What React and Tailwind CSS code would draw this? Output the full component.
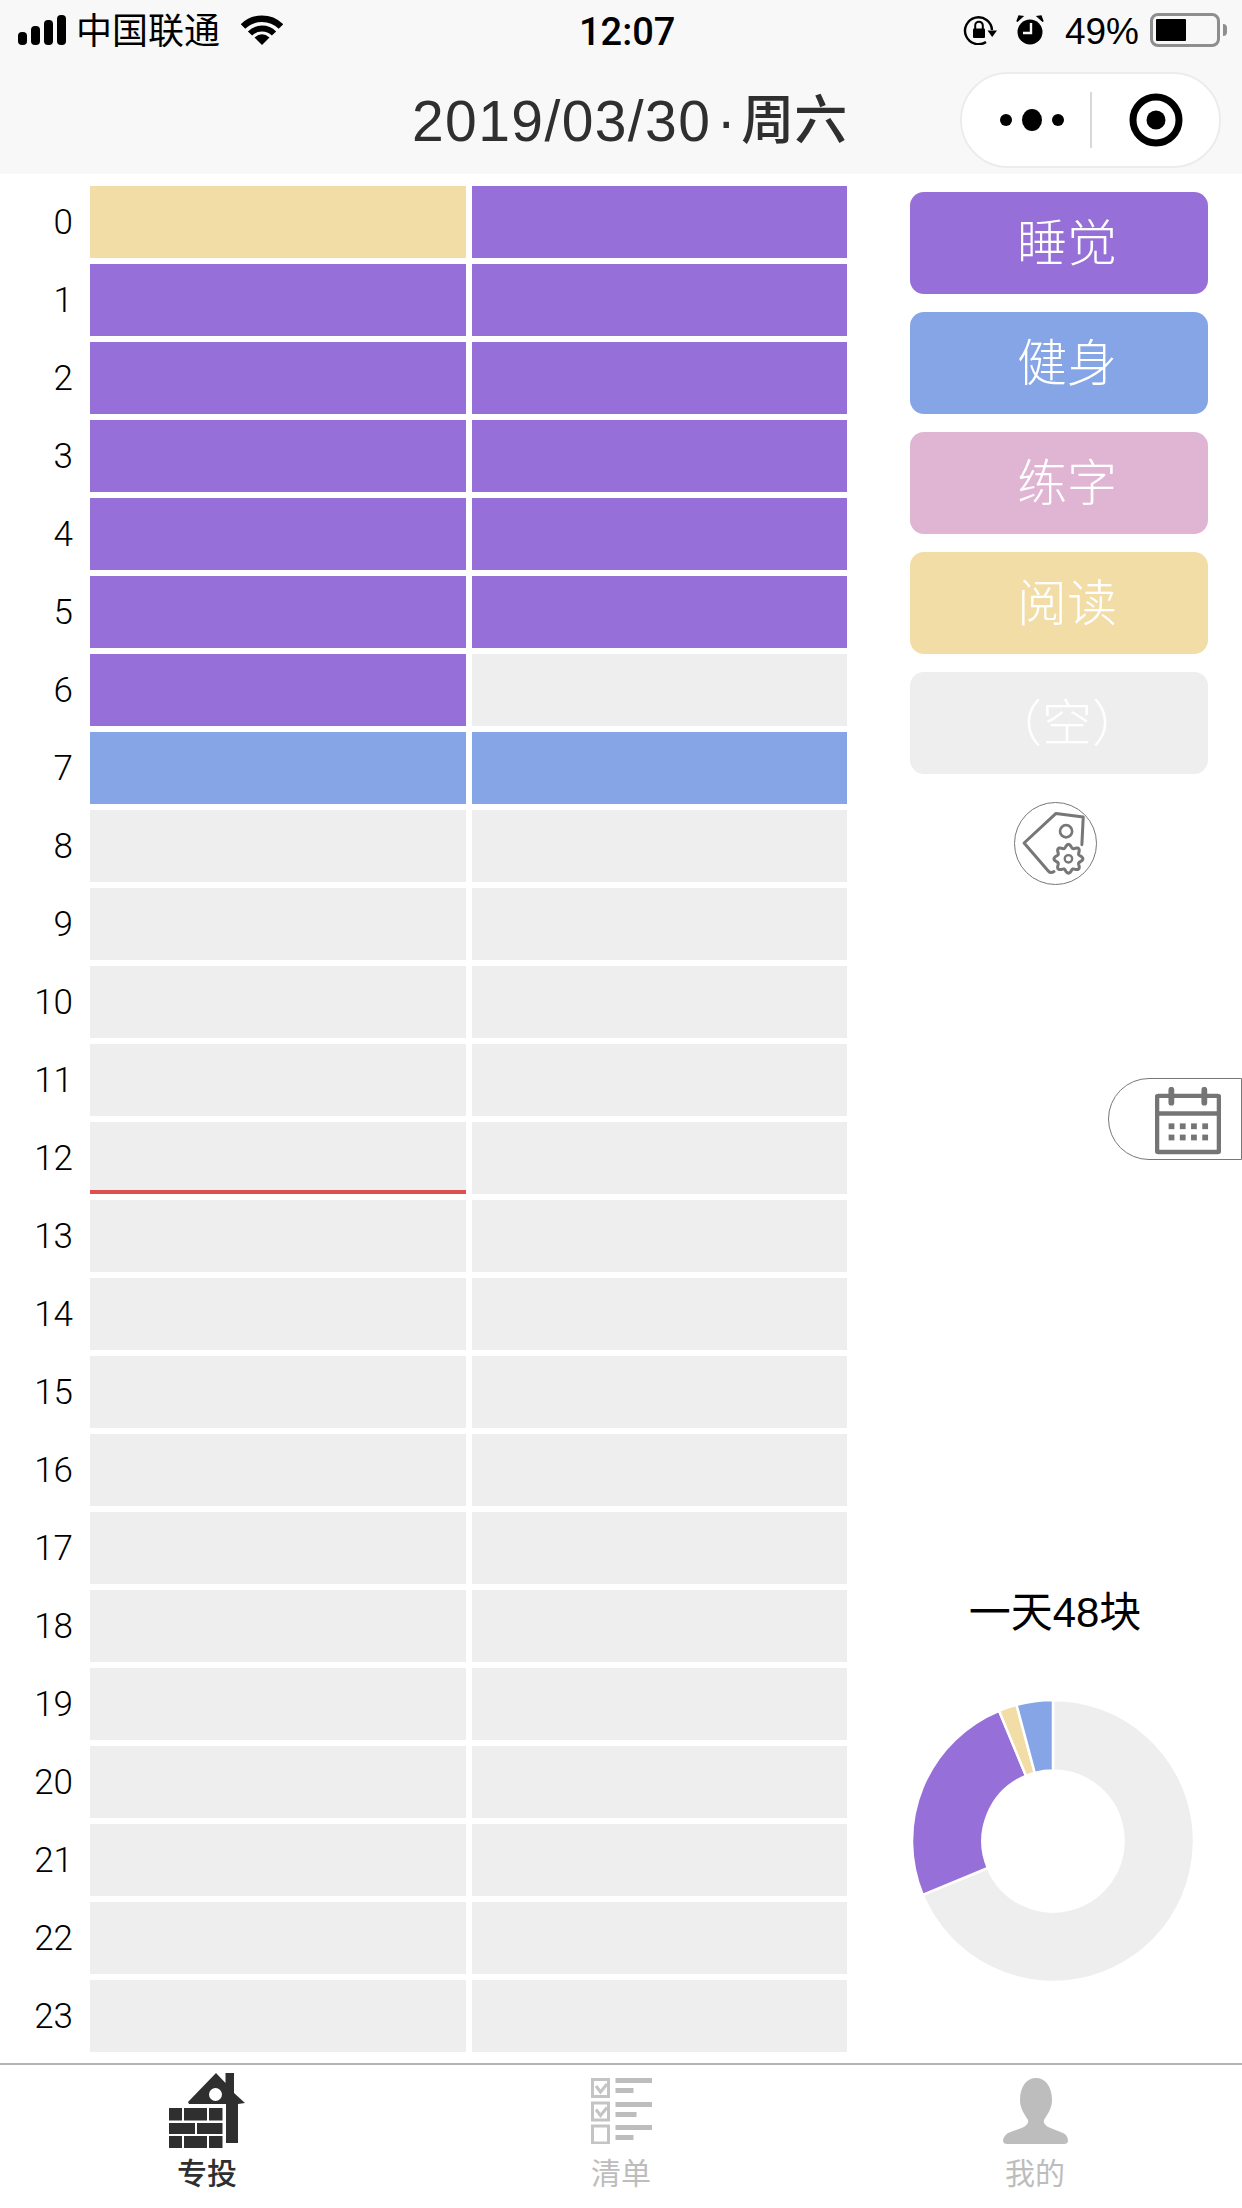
const PURPLE = 'bg-[#976fd8]';
const BLUE = 'bg-[#86a5e6]';
const PINK = 'bg-[#e0b4d3]';
const YELLOW = 'bg-[#f3dda6]';
const EMPTY = 'bg-[#eeeeee]';

const hours = Array.from({ length: 24 }, (_, i) => i);

function cellColors(hour) {
  if (hour === 0) return [YELLOW, PURPLE];
  if (hour <= 5) return [PURPLE, PURPLE];
  if (hour === 6) return [PURPLE, EMPTY];
  if (hour === 7) return [BLUE, BLUE];
  return [EMPTY, EMPTY];
}

const labels = [
  { text: '睡觉', color: PURPLE },
  { text: '健身', color: BLUE },
  { text: '练字', color: PINK },
  { text: '阅读', color: YELLOW },
  { text: '（空）', color: EMPTY },
];

const segments = [
  { from: 0, to: 247.5, fill: '#eeeeee' },
  { from: 247.5, to: 337.5, fill: '#976fd8' },
  { from: 337.5, to: 345, fill: '#f3dda6' },
  { from: 345, to: 360, fill: '#86a5e6' },
];

function point(cx, cy, r, deg) {
  const a = (deg * Math.PI) / 180;
  return [cx + r * Math.sin(a), cy - r * Math.cos(a)];
}

function arcPath(cx, cy, outer, inner, from, to) {
  const large = to - from > 180 ? 1 : 0;
  const [x1, y1] = point(cx, cy, outer, from);
  const [x2, y2] = point(cx, cy, outer, to);
  const [x3, y3] = point(cx, cy, inner, to);
  const [x4, y4] = point(cx, cy, inner, from);
  return `M${x1} ${y1}A${outer} ${outer} 0 ${large} 1 ${x2} ${y2}L${x3} ${y3}A${inner} ${inner} 0 ${large} 0 ${x4} ${y4}Z`;
}

function gearPath(cx, cy) {
  let d = '';
  for (let i = 0; i <= 96; i++) {
    const a = (i / 96) * Math.PI * 2;
    const r = 38 + 5 * Math.cos(a * 8);
    d += `${i === 0 ? 'M' : 'L'}${cx + r * Math.sin(a)} ${cy - r * Math.cos(a)}`;
  }
  return d + 'Z';
}

function SignalIcon() {
  return (
    <svg width="48" height="30" viewBox="0 0 48 30" className="shrink-0">
      <rect x="0" y="17" width="9" height="13" rx="4" fill="#000" />
      <rect x="13" y="11" width="9" height="19" rx="4" fill="#000" />
      <rect x="26" y="5" width="9" height="25" rx="4" fill="#000" />
      <rect x="39" y="0" width="9" height="30" rx="4" fill="#000" />
    </svg>
  );
}

function WifiIcon() {
  return (
    <svg width="42" height="30" viewBox="0 0 42 30" className="shrink-0">
      <path d="M2 11.5A27 27 0 0 1 40 11.5" fill="none" stroke="#000" strokeWidth="6.5" />
      <path d="M9 18.5A17 17 0 0 1 33 18.5" fill="none" stroke="#000" strokeWidth="6" />
      <path d="M21 30L13.5 22.5Q21 16 28.5 22.5Z" fill="#000" />
    </svg>
  );
}

function RotateLockIcon() {
  return (
    <svg width="34" height="30" viewBox="0 0 34 30" className="shrink-0">
      <path d="M29 15A13.5 13.5 0 1 0 23 27" fill="none" stroke="#000" strokeWidth="2.4" />
      <path d="M24.5 15.5H34L29.2 22Z" fill="#000" />
      <rect x="10" y="13.5" width="12" height="9.5" rx="1" fill="#000" />
      <path d="M12.2 14V10.5a3.8 3.8 0 0 1 7.6 0V14" fill="none" stroke="#000" strokeWidth="2" />
    </svg>
  );
}

function AlarmIcon() {
  return (
    <svg width="28" height="30" viewBox="0 0 28 30" className="shrink-0">
      <circle cx="14" cy="17" r="12.5" fill="#000" />
      <path d="M15 8V18H7" fill="none" stroke="#f8f8f8" strokeWidth="2.4" />
      <path d="M1 6.5L6.5 1.5L3 1Z M27 6.5L21.5 1.5L25 1Z" fill="#000" stroke="#000" strokeWidth="1.5" />
    </svg>
  );
}

function StatusBar() {
  return (
    <div className="h-[60px] flex items-center pl-[18px] pr-[15px] text-[36px] leading-none text-black">
      <SignalIcon />
      <span className="ml-[10px] mt-[3px]">中国联通</span>
      <span className="ml-[21px]"><WifiIcon /></span>
      <span className="ml-[296px] mt-[4px] [font-family:Roboto,sans-serif] font-medium text-[38px]">12:07</span>
      <span className="ml-auto"><RotateLockIcon /></span>
      <span className="ml-[19px]"><AlarmIcon /></span>
      <span className="ml-[21px] mt-[3px] text-[37px]">49%</span>
      <div className="ml-[11px] w-[70px] h-[34px] border-[3px] border-[#8e8e8e] rounded-[8px] p-[3px] flex">
        <div className="w-[30px] bg-black rounded-[1px]" />
      </div>
      <div className="ml-[3px] w-[4px] h-[12px] bg-[#8e8e8e] rounded-r-[4px]" />
    </div>
  );
}

function NavBar() {
  return (
    <div className="h-[114px] flex items-start">
      <div className="ml-[412px] mt-[28px] flex items-center text-[57px] leading-[66px] text-[#2f2f2f] whitespace-nowrap">
        <span className="tracking-[1.4px]">2019/03/30</span>
        <span className="w-[30px] text-center">·</span>
        <span className="text-[53px] font-medium">周六</span>
      </div>
      <div className="ml-auto mr-[21px] mt-[12px] w-[261px] h-[96px] rounded-full bg-white border-2 border-[#ececec] flex items-center">
        <svg width="66" height="24" viewBox="0 0 66 24" className="ml-[37px]">
          <circle cx="7" cy="12" r="6" fill="#000" />
          <ellipse cx="33" cy="12" rx="10" ry="11" fill="#000" />
          <circle cx="59" cy="12" r="6" fill="#000" />
        </svg>
        <div className="ml-[25px] w-[2px] h-[56px] bg-[#d8d8d8]" />
        <svg width="54" height="54" viewBox="0 0 54 54" className="ml-[37px]">
          <circle cx="27" cy="27" r="23" fill="none" stroke="#000" strokeWidth="7" />
          <circle cx="27" cy="27" r="9.5" fill="#000" />
        </svg>
      </div>
    </div>
  );
}

function TagGearIcon() {
  return (
    <div className="w-[83px] h-[83px] rounded-full border border-[#777777] flex items-center justify-center">
      <svg width="83" height="83" viewBox="103 63 247 247" className="shrink-0">
        <path d="M305 190L309 108L228 97L133 185L205 268C210 274 216 274 222 270" fill="none" stroke="#777" strokeWidth="9" strokeLinecap="round" strokeLinejoin="round" />
        <circle cx="258" cy="150" r="18" fill="none" stroke="#777" strokeWidth="8" />
        <path d={gearPath(265, 232)} fill="#fff" stroke="#777" strokeWidth="9" />
        <circle cx="265" cy="232" r="11" fill="none" stroke="#777" strokeWidth="7" />
      </svg>
    </div>
  );
}

function Donut() {
  return (
    <svg width="290" height="284" viewBox="0 0 290 284" className="mt-[56px] mb-[80px] shrink-0">
      {segments.map((s) => (
        <path key={s.from} d={arcPath(143, 142, 141, 70.5, s.from, s.to)} fill={s.fill} stroke="#fff" strokeWidth="2.5" />
      ))}
    </svg>
  );
}

function CalendarTab() {
  return (
    <div className="absolute left-[1108px] top-[1078px] w-[134px] h-[82px] rounded-l-[41px] border border-[#777777] bg-white flex items-center">
      <svg width="66" height="68" viewBox="527 920 194 200" className="ml-[46px] mt-[4px] shrink-0">
        <rect x="533" y="946" width="182" height="165" rx="3" fill="none" stroke="#757575" strokeWidth="13" />
        <path d="M533 998H715" stroke="#757575" strokeWidth="13" />
        <path d="M575 928V966M672 928V966" stroke="#757575" strokeWidth="17" strokeLinecap="round" />
        {[567, 600, 633, 666].map((x) => (
          <g key={x} fill="#757575">
            <rect x={x} y="1027" width="17" height="17" />
            <rect x={x} y="1060" width="17" height="17" />
          </g>
        ))}
      </svg>
    </div>
  );
}

function HomeIcon() {
  return (
    <svg width="76" height="75" viewBox="0 0 76 75">
      <g fill="#2f2f2f">
        <path d="M47 0L56.5 10V0H65V20L76 30L69 31V70H57V31H20L19 29Z" />
        <rect x="0" y="35" width="13" height="12.5" />
        <rect x="15" y="35" width="23" height="12.5" />
        <rect x="40" y="35" width="13.5" height="12.5" />
        <rect x="0" y="50" width="26" height="11" />
        <rect x="28" y="50" width="25.5" height="11" />
        <rect x="0" y="63" width="13" height="12" />
        <rect x="15" y="63" width="23" height="12" />
        <rect x="40" y="63" width="13.5" height="12" />
      </g>
      <circle cx="46.5" cy="21.5" r="6.5" fill="#fff" />
    </svg>
  );
}

function ListIcon() {
  return (
    <svg width="61" height="66" viewBox="0 0 61 66">
      <g fill="#bdbdbd">
        <rect x="24.5" y="0" width="36.5" height="5" />
        <rect x="24.5" y="10" width="18" height="5" />
        <rect x="24.5" y="24" width="36.5" height="5" />
        <rect x="24.5" y="34" width="21" height="5" />
        <rect x="24.5" y="47" width="36.5" height="5" />
        <rect x="24.5" y="57" width="18" height="5" />
      </g>
      <g fill="none" stroke="#c4c4c4" strokeWidth="3">
        <rect x="1.5" y="1.5" width="16" height="17" />
        <rect x="1.5" y="25" width="16" height="17" />
        <rect x="1.5" y="48" width="16" height="17" />
        <path d="M5 8L9.5 14L16 6M5 31.5L9.5 37.5L16 29.5" />
      </g>
    </svg>
  );
}

function PersonIcon() {
  return (
    <svg width="65" height="66" viewBox="0 0 65 66">
      <path
        d="M17 22C17 8 24 0 33 0C42 0 49 8 49 22C49 31 44 37 41 42C40 46 44 49 50 51L60 55C64 57 65 60 65 63C65 65 63 66 61 66L4 66C2 66 0 65 0 63C0 60 2 57 5 55L16 51C22 49 26 46 25 42C22 37 17 31 17 22Z"
        fill="#bdbdbd"
      />
    </svg>
  );
}

function TabItem({ icon, label, active }) {
  return (
    <div className="flex-1 flex flex-col items-center">
      <div className="h-[75px] flex items-center">{icon}</div>
      <span className={`mt-[9px] text-[30px] leading-[34px] ${active ? 'text-[#2f2f2f] font-medium' : 'text-[#bdbdbd]'}`}>{label}</span>
    </div>
  );
}

export default function App() {
  return (
    <div className="relative w-[1242px] h-[2208px] overflow-hidden bg-white flex flex-col [font-family:'Liberation_Sans','Noto_Sans_CJK_SC',sans-serif]">
      <div className="h-[174px] shrink-0 bg-[#f8f8f8]">
        <StatusBar />
        <NavBar />
      </div>

      <div className="flex-1 min-h-0 flex items-start">
        <div className="mt-[12px] ml-[20px] w-[828px] flex flex-col gap-[6px]">
          {hours.map((hour) => {
            const [left, right] = cellColors(hour);
            return (
              <div key={hour} className="h-[72px] flex items-center">
                <span className="w-[53px] pt-[2px] text-right text-[35px] text-black [font-family:Roboto,sans-serif] font-light">{hour}</span>
                <div className={`relative ml-[17px] w-[376px] h-full ${left}`}>
                  {hour === 12 && <div className="absolute left-0 right-0 bottom-0 h-[4px] bg-[#dc5050]" />}
                </div>
                <div className={`ml-[6px] w-[375px] h-full ${right}`} />
              </div>
            );
          })}
        </div>

        <div className="ml-[62px] w-[298px] h-full flex flex-col pt-[18px]">
          <div className="flex flex-col gap-[18px]">
            {labels.map((l) => (
              <div key={l.text} className={`h-[102px] rounded-[14px] flex items-center justify-center pl-[16px] pt-[2px] text-white text-[50px] font-light ${l.color}`}>
                {l.text}
              </div>
            ))}
          </div>
          <div className="mt-[28px] w-[290px] flex justify-center">
            <TagGearIcon />
          </div>
          <div className="mt-auto w-[290px] text-center text-[42px] leading-[60px] text-black">一天48块</div>
          <Donut />
        </div>
      </div>

      <div className="h-[145px] shrink-0 border-t-2 border-[#b4b4b4] pt-[8px] flex bg-white">
        <TabItem icon={<HomeIcon />} label="专投" active />
        <TabItem icon={<ListIcon />} label="清单" />
        <TabItem icon={<PersonIcon />} label="我的" />
      </div>

      <CalendarTab />
    </div>
  );
}
